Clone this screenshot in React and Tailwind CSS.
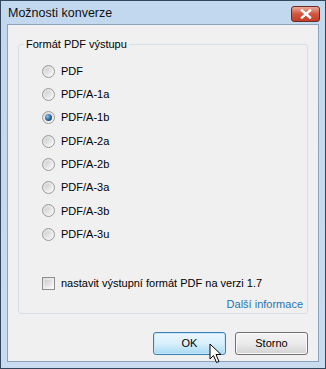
import React, { useState } from "react";

const formats = ["PDF", "PDF/A-1a", "PDF/A-1b", "PDF/A-2a", "PDF/A-2b", "PDF/A-3a", "PDF/A-3b", "PDF/A-3u"];

const Radio = ({ checked }) => (
  <span className="w-[13px] h-[13px] rounded-full border border-[#9a9a9a] bg-gradient-to-br from-[#d8d8d8] to-[#fbfbfb] flex items-center justify-center shrink-0">
    {checked ? (
      <span className="w-[7px] h-[7px] rounded-full bg-[radial-gradient(circle_at_35%_35%,#8cc4ee,#1f5a8f_60%,#0e3a66)]" />
    ) : (
      <span className="w-[7px] h-[7px] rounded-full bg-gradient-to-br from-[#cfcfcf] to-[#f4f4f4]" />
    )}
  </span>
);

export default function App() {
  const [selected, setSelected] = useState("PDF/A-1b");

  return (
    <div className="w-[326px] h-[369px] bg-gradient-to-b from-[#c2d8ee] to-[#c9dcef] border border-[#34465c] flex flex-col font-['Liberation_Sans',Arial,sans-serif] text-[11px] text-black select-none">
      {/* Title bar */}
      <div className="h-[23px] flex items-center justify-between pl-[7px] pr-[5px]">
        <span className="text-[12.5px] text-[#111] pt-[1px]">Možnosti konverze</span>
        <button className="w-[29px] h-[16px] mt-[2px] rounded-[3px] border border-[#6b2a22] bg-gradient-to-b from-[#e9a99c] via-[#d0553f] to-[#c2402a] flex items-center justify-center">
          <svg width="12" height="10" viewBox="0 0 12 10">
            <path d="M2 1.5 L10 8.5 M10 1.5 L2 8.5" stroke="#fff" strokeWidth="2.4" strokeLinecap="square" />
          </svg>
        </button>
      </div>

      {/* Client area */}
      <div className="flex-1 mx-[6px] mb-[6px] border border-[#8ca3bd] bg-[#f0f0f0] flex flex-col px-[10px] pt-[11px] pb-[6px]">
        <fieldset className="border border-[#d5dfe5] rounded-[3px] px-[23px] pb-0 pt-0 mx-0">
          <legend className="ml-[-18px] px-[2px] text-[11px] text-black">Formát PDF výstupu</legend>
          <div className="flex flex-col pt-[7px]">
            {formats.map((f) => (
              <label
                key={f}
                onClick={() => setSelected(f)}
                className="h-[23.3px] flex items-center gap-[6px] cursor-default"
              >
                <Radio checked={selected === f} />
                <span>{f}</span>
              </label>
            ))}
          </div>
          <div className="flex items-center gap-[6px] mt-[29px]">
            <span className="w-[13px] h-[13px] border border-[#8f8f8f] bg-gradient-to-br from-[#dcdcdc] to-[#fbfbfb] p-[2px] shrink-0">
              <span className="block w-full h-full bg-gradient-to-br from-[#cfcfcf] to-[#f2f2f2]" />
            </span>
            <span>nastavit výstupní formát PDF na verzi 1.7</span>
          </div>
          <div className="flex justify-end mt-[5px] mr-[-19px]">
            <a className="text-[#2a73b0] cursor-pointer">Další informace</a>
          </div>
        </fieldset>

        <div className="flex justify-end gap-[9px] mt-auto">
          <div className="relative">
            <button className="w-[73px] h-[23px] rounded-[3px] border border-[#3c7fb1] bg-gradient-to-b from-[#eaf6fd] via-[#d9f0fc] to-[#a7d9f5] shadow-[inset_0_0_0_1px_#c6e6f9] text-[11px]">
              OK
            </button>
            <svg className="absolute left-[56px] top-[11px]" width="14" height="21" viewBox="0 0 14 21">
              <path d="M1 1 L1 16 L4.5 12.5 L7.5 19.5 L10 18.5 L7 11.5 L12 11.5 Z" fill="#fff" stroke="#000" strokeWidth="1" strokeLinejoin="round" />
            </svg>
          </div>
          <button className="w-[73px] h-[23px] rounded-[3px] border border-[#707070] bg-gradient-to-b from-[#f3f3f3] via-[#ebebeb] to-[#d2d2d2] shadow-[inset_0_0_0_1px_#fbfbfb] text-[11px]">
            Storno
          </button>
        </div>
      </div>
    </div>
  );
}
